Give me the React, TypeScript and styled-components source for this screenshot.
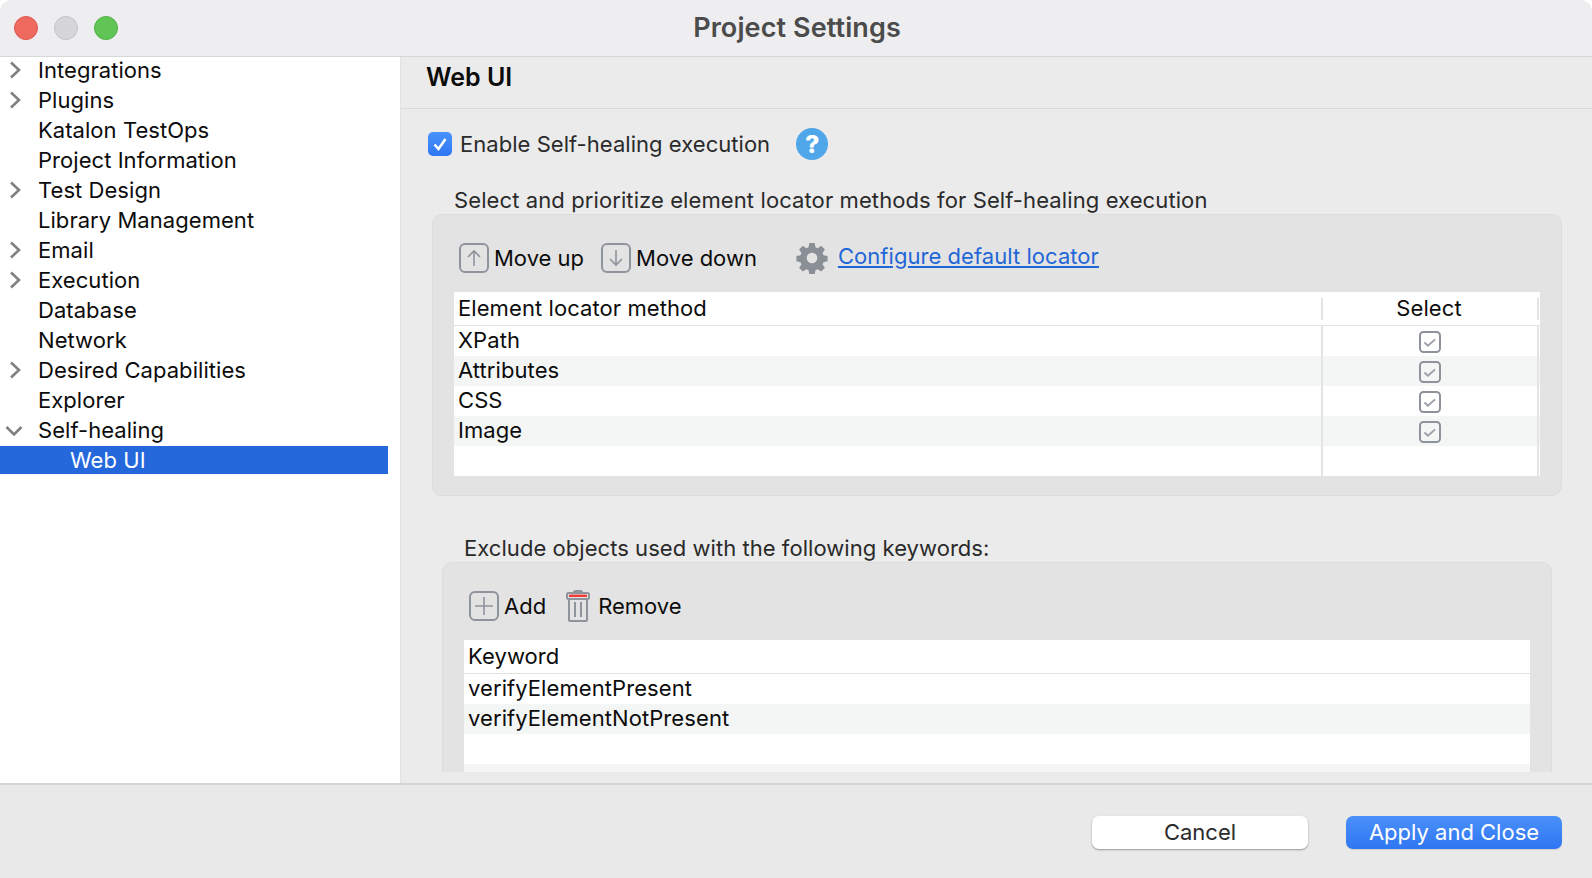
import React from "react";
import styled, { createGlobalStyle } from "styled-components";

const GlobalStyle = createGlobalStyle`
  html, body {
    margin: 0;
    padding: 0;
    background: #fff;
  }
  body {
    font-family: Inter, "Liberation Sans", sans-serif;
    -webkit-font-smoothing: antialiased;
  }
`;

const Window = styled.div`
  width: 1592px;
  height: 878px;
  display: flex;
  flex-direction: column;
  overflow: hidden;
  background: #ebebeb;
  border-radius: 12px 12px 0 0;
`;

const TitleBar = styled.header`
  flex: 0 0 57px;
  box-sizing: border-box;
  display: grid;
  grid-template-columns: 1fr auto 1fr;
  align-items: center;
  padding: 0 12px 2px 14px;
  background: #eeeef0;
  border-bottom: 1px solid #d6d6d6;
`;

const Lights = styled.div`
  display: flex;
  gap: 16px;
  margin-top: 2px;
`;

const Light = styled.span<{ $color: string; $edge: string }>`
  width: 24px;
  height: 24px;
  box-sizing: border-box;
  border-radius: 50%;
  background: ${({ $color }) => $color};
  border: 1px solid ${({ $edge }) => $edge};
`;

const WindowTitle = styled.h1`
  margin: 0;
  font-size: 27px;
  font-weight: 600;
  letter-spacing: 0.1px;
  color: #4b4b4b;
`;

const Body = styled.div`
  flex: 1;
  min-height: 0;
  display: flex;
`;

const Sidebar = styled.nav`
  flex: 0 0 401px;
  background: #fff;
  overflow: hidden;
  border-right: 1px solid #e2e2e2;
  box-sizing: border-box;
`;

const TreeList = styled.ul`
  list-style: none;
  margin: -2px 0 0;
  padding: 0;
`;

const TreeRow = styled.li<{ $selected?: boolean; $depth?: number }>`
  height: ${({ $selected }) => ($selected ? "28px" : "30px")};
  width: 388px;
  margin: ${({ $selected }) => ($selected ? "1px 0" : "0")};
  display: flex;
  align-items: center;
  position: relative;
  padding-left: ${({ $depth }) => ($depth ? "70px" : "38px")};
  box-sizing: border-box;
  font-size: 22px;
  letter-spacing: 0.05px;
  color: ${({ $selected }) => ($selected ? "#fff" : "#0c0c0c")};
  background: ${({ $selected }) => ($selected ? "#2468dc" : "transparent")};
`;

const Twisty = styled.svg`
  position: absolute;
  left: 4px;
  top: 5px;
  width: 20px;
  height: 20px;
  fill: none;
  stroke: #808080;
  stroke-width: 2.6;
`;

const Main = styled.main`
  flex: 1;
  min-width: 0;
  display: flex;
  flex-direction: column;
  padding-bottom: 11px;
`;

const PageHeader = styled.div`
  flex: 0 0 52px;
  box-sizing: border-box;
  display: flex;
  align-items: center;
  padding: 0 0 12px 25px;
  border-bottom: 1px solid #d9d9d9;
  font-size: 25px;
  font-weight: 600;
  color: #0c0c0c;
`;

const Content = styled.div`
  flex: 1;
  min-height: 0;
  overflow: hidden;
  padding: 21px 0 0 27px;
`;

const EnableRow = styled.div`
  display: flex;
  align-items: center;
  height: 28px;
  font-size: 22px;
  letter-spacing: 0.04px;
  color: #2a2a2a;
`;

const BlueCheck = styled.span`
  width: 24px;
  height: 24px;
  border-radius: 5px;
  margin-right: 8px;
  background: linear-gradient(#4a93fb, #2f77f3);
  display: flex;
  align-items: center;
  justify-content: center;
`;

const HelpBadge = styled.span`
  width: 32px;
  height: 32px;
  margin-left: 26px;
  border-radius: 50%;
  background: #4fa6e9;
  color: #fff;
  font-size: 25px;
  font-weight: 800;
  display: flex;
  align-items: center;
  justify-content: center;
`;

const SectionLabel = styled.div<{ $indent: number; $top: number; $spacing: number }>`
  margin: ${({ $top }) => $top}px 0 0 ${({ $indent }) => $indent}px;
  height: 28px;
  line-height: 28px;
  font-size: 22px;
  letter-spacing: ${({ $spacing }) => $spacing}px;
  color: #2a2a2a;
`;

const GroupBox = styled.section<{ $indent: number; $width: number }>`
  margin: 0 0 0 ${({ $indent }) => $indent}px;
  width: ${({ $width }) => $width}px;
  box-sizing: border-box;
  background: #e3e3e3;
  border: 1px solid #dcdcdc;
  border-radius: 10px;
  padding: 0 21px;
`;

const Toolbar = styled.div`
  height: 77px;
  box-sizing: border-box;
  padding-top: 8px;
  display: flex;
  align-items: center;
  font-size: 22px;
  color: #0c0c0c;
`;

const ToolButton = styled.div<{ $gap: number; $after: number }>`
  display: flex;
  align-items: center;
  gap: ${({ $gap }) => $gap}px;
  margin-right: ${({ $after }) => $after}px;
  padding-left: 5px;
`;

const ToolLink = styled.a`
  color: #1f66d9;
  text-decoration: underline;
  letter-spacing: 0.05px;
  margin: 0 0 4px 10px;
`;

const Table = styled.div`
  background: #fff;
  overflow: hidden;
  letter-spacing: 0.08px;
`;

const HeaderRow = styled.div<{ $cols: string }>`
  height: 34px;
  box-sizing: border-box;
  display: grid;
  grid-template-columns: ${({ $cols }) => $cols};
  align-items: center;
  border-bottom: 1px solid #e2e2e2;
  font-size: 22px;
  color: #0c0c0c;
`;

const HeaderCell = styled.div<{ $center?: boolean; $divider?: boolean }>`
  height: 22px;
  line-height: 20px;
  padding-left: ${({ $center }) => ($center ? "0" : "4px")};
  padding-right: ${({ $center }) => ($center ? "2px" : "0")};
  text-align: ${({ $center }) => ($center ? "center" : "left")};
  border-left: ${({ $divider }) => ($divider ? "2px solid #e4e4e4" : "none")};
`;

const HeaderEnd = styled.div`
  height: 22px;
  border-left: 2px solid #e4e4e4;
`;

const BodyRow = styled.div<{ $cols: string; $odd: boolean }>`
  height: 30px;
  display: grid;
  grid-template-columns: ${({ $cols }) => $cols};
  align-items: stretch;
  font-size: 22px;
  color: #0c0c0c;
  background: ${({ $odd }) => ($odd ? "#f4f5f5" : "#fff")};
`;

const Cell = styled.div`
  display: flex;
  align-items: center;
  padding: 0 0 2px 4px;
`;

const CheckCell = styled.div`
  display: flex;
  align-items: center;
  justify-content: center;
  padding-top: 1px;
  border-left: 2px solid #e4e4e4;
`;

const Footer = styled.footer`
  flex: 0 0 95px;
  box-sizing: border-box;
  display: flex;
  justify-content: flex-end;
  align-items: flex-start;
  gap: 38px;
  padding: 31px 30px 0 0;
  background: #e9e9e9;
  border-top: 2px solid #d5d5d5;
`;

const DialogButton = styled.button<{ $primary?: boolean }>`
  width: 216px;
  height: 33px;
  padding: 0 0 2px;
  border: none;
  border-radius: 7px;
  font-family: inherit;
  font-size: 22px;
  color: ${({ $primary }) => ($primary ? "#fff" : "#2a2a2a")};
  background: ${({ $primary }) =>
    $primary ? "linear-gradient(#4a90fa, #2f76f2)" : "#fff"};
  box-shadow: ${({ $primary }) =>
    $primary ? "0 1px 1px rgba(0, 0, 0, 0.12)" : "0 1px 2px rgba(0, 0, 0, 0.35)"};
`;

const GroupEnd = styled.div`
  height: 19px;
`;

const treeItems = [
  { label: "Integrations", twisty: "right" },
  { label: "Plugins", twisty: "right" },
  { label: "Katalon TestOps" },
  { label: "Project Information" },
  { label: "Test Design", twisty: "right" },
  { label: "Library Management" },
  { label: "Email", twisty: "right" },
  { label: "Execution", twisty: "right" },
  { label: "Database" },
  { label: "Network" },
  { label: "Desired Capabilities", twisty: "right" },
  { label: "Explorer" },
  { label: "Self-healing", twisty: "down" },
  { label: "Web UI", depth: 1, selected: true },
];

const locatorMethods = ["XPath", "Attributes", "CSS", "Image", ""];
const keywords = ["verifyElementPresent", "verifyElementNotPresent", "", ""];

const IconBox = ({ children }: { children: React.ReactNode }) => (
  <svg width="30" height="30" viewBox="0 0 30 30" fill="none" stroke="#8e939c">
    <rect x="1" y="1" width="28" height="28" rx="5" strokeWidth="2" />
    {children}
  </svg>
);

const SmallCheck = () => (
  <svg width="22" height="22" viewBox="0 0 22 22" fill="none">
    <rect x="1" y="1" width="20" height="20" rx="3.5" stroke="#8e929b" strokeWidth="2" />
    <path d="M5.5 11.5l3.4 3.2 7.2-6.4" stroke="#9a9ea6" strokeWidth="1.8" />
  </svg>
);

const Gear = () => (
  <svg width="32" height="32" viewBox="0 0 24 24" fill="#8b9097">
    <path
      fillRule="evenodd"
      d="M10 0.8h4l.6 3.1c.6.2 1.2.4 1.7.7l2.6-1.8 2.8 2.8-1.8 2.6c.3.5.5 1.1.7 1.7l3.1.6v4l-3.1.6c-.2.6-.4 1.2-.7 1.7l1.8 2.6-2.8 2.8-2.6-1.8c-.5.3-1.1.5-1.7.7l-.6 3.1h-4l-.6-3.1c-.6-.2-1.2-.4-1.7-.7l-2.6 1.8-2.8-2.8 1.8-2.6c-.3-.5-.5-1.1-.7-1.7l-3.1-.6v-4l3.1-.6c.2-.6.4-1.2.7-1.7L2.3 5.6l2.8-2.8 2.6 1.8c.5-.3 1.1-.5 1.7-.7zM12 8a4 4 0 1 0 0 8 4 4 0 0 0 0-8z"
    />
  </svg>
);

const Trash = () => (
  <svg width="24" height="32" viewBox="0 0 24 32" fill="none" stroke="#8e939c" strokeWidth="2">
    <path d="M8 2.5c0-1 .6-1.5 1.5-1.5h5c.9 0 1.5.5 1.5 1.5" />
    <rect x="1" y="3" width="22" height="6" rx="1.5" />
    <path d="M3 5.8h18" stroke="#ee3b36" strokeWidth="2.4" />
    <path d="M3 9v21a1 1 0 0 0 1 1h16a1 1 0 0 0 1-1V9M9 12v15M15 12v15" />
  </svg>
);

const App: React.FC = () => {
  const locatorCols = "867px 216px 3px";
  const keywordCols = "1fr";

  return (
    <>
      <GlobalStyle />
      <Window>
        <TitleBar>
          <Lights>
            <Light $color="#ee6a5f" $edge="#e0574c" />
            <Light $color="#d6d6d8" $edge="#c4c4c6" />
            <Light $color="#60c554" $edge="#50b044" />
          </Lights>
          <WindowTitle>Project Settings</WindowTitle>
        </TitleBar>
        <Body>
          <Sidebar>
            <TreeList>
              {treeItems.map((item) => (
                <TreeRow key={item.label} $selected={item.selected} $depth={item.depth}>
                  {item.twisty === "right" && (
                    <Twisty viewBox="0 0 20 20">
                      <path d="M7 2.5l8 7.5-8 7.5" />
                    </Twisty>
                  )}
                  {item.twisty === "down" && (
                    <Twisty viewBox="0 0 20 20">
                      <path d="M2.5 7l7.5 7.5L17.5 7" />
                    </Twisty>
                  )}
                  {item.label}
                </TreeRow>
              ))}
            </TreeList>
          </Sidebar>
          <Main>
            <PageHeader>Web UI</PageHeader>
            <Content>
              <EnableRow>
                <BlueCheck>
                  <svg width="18" height="18" viewBox="0 0 18 18" fill="none">
                    <path d="M3.5 9.5l4 4.5 7-10" stroke="#fff" strokeWidth="2.6" />
                  </svg>
                </BlueCheck>
                Enable Self-healing execution
                <HelpBadge>?</HelpBadge>
              </EnableRow>
              <SectionLabel $indent={26} $top={28} $spacing={0.1}>
                Select and prioritize element locator methods for Self-healing execution
              </SectionLabel>
              <GroupBox $indent={4} $width={1130}>
                <Toolbar>
                  <ToolButton $gap={5} $after={12}>
                    <IconBox>
                      <path d="M15 8v15M9 14l6-6 6 6" strokeWidth="1.6" />
                    </IconBox>
                    Move up
                  </ToolButton>
                  <ToolButton $gap={5} $after={39}>
                    <IconBox>
                      <path d="M15 7v15M9 16l6 6 6-6" strokeWidth="1.6" />
                    </IconBox>
                    Move down
                  </ToolButton>
                  <Gear />
                  <ToolLink>Configure default locator</ToolLink>
                </Toolbar>
                <Table>
                  <HeaderRow $cols={locatorCols}>
                    <HeaderCell>Element locator method</HeaderCell>
                    <HeaderCell $center $divider>
                      Select
                    </HeaderCell>
                    <HeaderEnd />
                  </HeaderRow>
                  {locatorMethods.map((name, i) => (
                    <BodyRow key={i} $cols={locatorCols} $odd={i % 2 === 1}>
                      <Cell>{name}</Cell>
                      <CheckCell>{name && <SmallCheck />}</CheckCell>
                      <CheckCell />
                    </BodyRow>
                  ))}
                </Table>
                <GroupEnd />
              </GroupBox>
              <SectionLabel $indent={36} $top={38} $spacing={0.05}>
                Exclude objects used with the following keywords:
              </SectionLabel>
              <GroupBox $indent={14} $width={1110}>
                <Toolbar>
                  <ToolButton $gap={5} $after={15}>
                    <IconBox>
                      <path d="M15 6v18M6 15h18" strokeWidth="1.6" />
                    </IconBox>
                    Add
                  </ToolButton>
                  <ToolButton $gap={8} $after={0}>
                    <Trash />
                    Remove
                  </ToolButton>
                </Toolbar>
                <Table>
                  <HeaderRow $cols={keywordCols}>
                    <HeaderCell>Keyword</HeaderCell>
                  </HeaderRow>
                  {keywords.map((word, i) => (
                    <BodyRow key={i} $cols={keywordCols} $odd={i % 2 === 1}>
                      <Cell>{word}</Cell>
                    </BodyRow>
                  ))}
                </Table>
              </GroupBox>
            </Content>
          </Main>
        </Body>
        <Footer>
          <DialogButton>Cancel</DialogButton>
          <DialogButton $primary>Apply and Close</DialogButton>
        </Footer>
      </Window>
    </>
  );
};

export default App;
